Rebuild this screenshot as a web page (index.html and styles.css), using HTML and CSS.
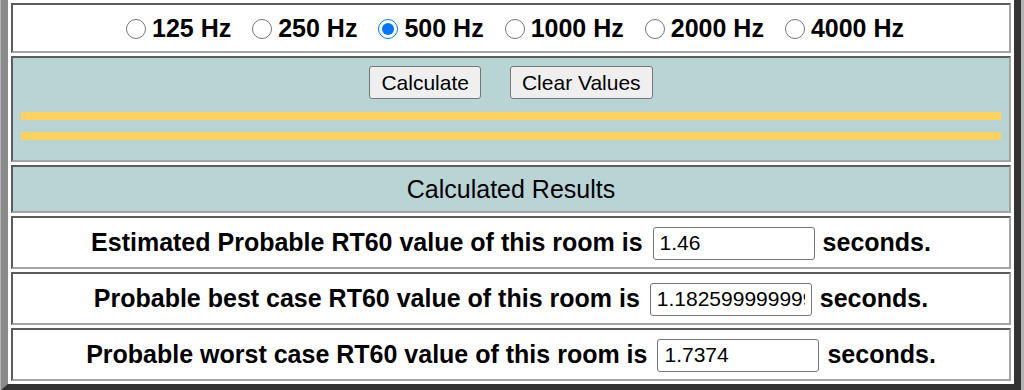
FILE: index.html
```html
<!DOCTYPE html>
<html lang="en">
  <head>
    <meta charset="UTF-8" />
    <meta name="viewport" content="width=device-width, initial-scale=1.0" />
    <title>RT60 Calculator</title>
    <link rel="stylesheet" href="styles.css">
  </head>
  <body>
    <div class="frame">
      <div class="cell freq">
        <label class="opt"><input type="radio" name="hz" />125 Hz</label>
        <label class="opt"><input type="radio" name="hz" />250 Hz</label>
        <label class="opt"><input type="radio" name="hz" checked />500 Hz</label>
        <label class="opt"><input type="radio" name="hz" />1000 Hz</label>
        <label class="opt"><input type="radio" name="hz" />2000 Hz</label>
        <label class="opt"><input type="radio" name="hz" />4000 Hz</label>
      </div>
      <div class="cell actions">
        <div class="buttons">
          <button type="button" class="btn">Calculate</button>
          <button type="button" class="btn">Clear Values</button>
        </div>
        <div class="bar"></div>
        <div class="bar"></div>
      </div>
      <div class="cell heading">Calculated Results</div>
      <div class="cell result">
        <span>Estimated Probable RT60 value of this room is</span>
        <input type="text" class="val" value="1.46" />
        <span class="unit">seconds.</span>
      </div>
      <div class="cell result">
        <span>Probable best case RT60 value of this room is</span>
        <input type="text" class="val" value="1.1825999999999999" />
        <span class="unit">seconds.</span>
      </div>
      <div class="cell result">
        <span>Probable worst case RT60 value of this room is</span>
        <input type="text" class="val" value="1.7374" />
        <span class="unit">seconds.</span>
      </div>
    </div>
  </body>
</html>
```
FILE: styles.css
```css
*{
    box-sizing: border-box;
}
body{
    margin: 0;
    background-color: #b4b4b4;
    font-family: "Liberation Sans", Arial, sans-serif;
    color: #000;
}
.frame{
    margin-left: 1px;
    width: 1020px;
    height: 390px;
    padding: 3px;
    background-color: #fff;
    border-left: 7px solid #8a8a8a;
    border-right: 7px solid #333;
    border-bottom: 6px solid #333;
    display: flex;
    flex-direction: column;
    gap: 3px;
}
.cell{
    border: 2px solid;
    border-color: #5c5c5c #a3a3a3 #a3a3a3 #5c5c5c;
    background-color: #fff;
}
.freq{
    height: 50px;
    display: flex;
    justify-content: center;
    align-items: center;
    gap: 21px;
    padding-left: 8px;
    font-size: 25px;
    font-weight: bold;
}
.opt{
    display: flex;
    align-items: center;
    gap: 6px;
    white-space: nowrap;
}
.opt input{
    width: 20px;
    height: 20px;
    margin: 1px 0 0 0;
}
.actions{
    height: 106px;
    background-color: #b9d4d4;
    padding: 8px 8px 0 8px;
}
.buttons{
    display: flex;
    justify-content: center;
    gap: 29px;
    margin-bottom: 13px;
}
.btn{
    height: 33px;
    padding: 0 11px;
    font-family: "Liberation Sans", Arial, sans-serif;
    font-size: 21px;
    color: #000;
    background-color: #efefef;
    border: 1px solid #767676;
    border-radius: 3px;
}
.bar{
    height: 8px;
    background-color: #fed25c;
    margin-bottom: 12px;
}
.heading{
    height: 48px;
    background-color: #b9d4d4;
    display: flex;
    justify-content: center;
    align-items: center;
    font-size: 25px;
}
.result{
    height: 53px;
    display: flex;
    justify-content: center;
    align-items: center;
    font-size: 25px;
    font-weight: bold;
    white-space: nowrap;
}
.val{
    width: 162px;
    height: 33px;
    margin: 1px 8px 0 10px;
    padding: 0 6px;
    font-family: "Liberation Sans", Arial, sans-serif;
    font-size: 21px;
    border: 1px solid #767676;
    border-radius: 3px;
}
```
